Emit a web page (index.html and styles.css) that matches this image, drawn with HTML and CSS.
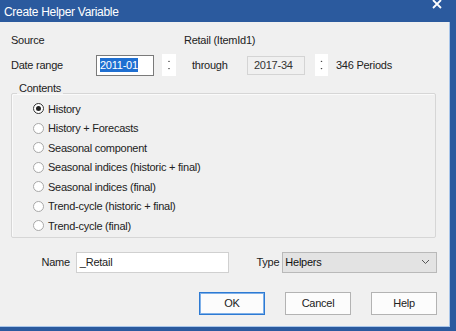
FILE: index.html
```html
<!DOCTYPE html>
<html>
<head>
<meta charset="utf-8">
<link rel="stylesheet" href="styles.css">
</head>
<body>
<div class="window">
  <div class="titlebar">
    <span class="title">Create Helper Variable</span>
    <svg class="close" width="10" height="9" viewBox="0 0 10 9"><path d="M1 0 L9 8 M9 0 L1 8" stroke="#fff" stroke-width="1.8"/></svg>
  </div>
  <div class="client">
    <div class="row row-source">
      <span class="lbl-main">Source</span>
      <span>Retail (ItemId1)</span>
    </div>
    <div class="row row-date">
      <span class="lbl-date">Date range</span>
      <div class="field field-focus"><span class="sel">2011-01</span></div>
      <svg class="spin spin1" width="14" height="22" viewBox="0 0 14 22"><path d="M6 8 L7 6.5 L8 8 Z M6 14 L7 15.5 L8 14 Z" fill="#444"/></svg>
      <span class="through">through</span>
      <div class="field field-dis">2017-34</div>
      <svg class="spin spin2" width="13" height="22" viewBox="0 0 13 22"><path d="M5.5 8 L6.5 6.5 L7.5 8 Z M5.5 14 L6.5 15.5 L7.5 14 Z" fill="#444"/></svg>
      <span class="periods">346 Periods</span>
    </div>
    <div class="group">
      <span class="legend">Contents</span>
      <div class="radios">
        <div class="radio-row"><span class="radio checked"></span>History</div>
        <div class="radio-row"><span class="radio"></span>History + Forecasts</div>
        <div class="radio-row"><span class="radio"></span>Seasonal component</div>
        <div class="radio-row"><span class="radio"></span>Seasonal indices (historic + final)</div>
        <div class="radio-row"><span class="radio"></span>Seasonal indices (final)</div>
        <div class="radio-row"><span class="radio"></span>Trend-cycle (historic + final)</div>
        <div class="radio-row"><span class="radio"></span>Trend-cycle (final)</div>
      </div>
    </div>
    <div class="row row-name">
      <span class="lbl-name">Name</span>
      <div class="field name-field">_Retail</div>
      <span class="lbl-type">Type</span>
      <div class="select">
        <span>Helpers</span>
        <svg width="9" height="6" viewBox="0 0 9 6"><path d="M1 1 L4.5 4.5 L8 1" fill="none" stroke="#555" stroke-width="1"/></svg>
      </div>
    </div>
    <div class="row row-buttons">
      <button class="btn btn-default">OK</button>
      <button class="btn">Cancel</button>
      <button class="btn">Help</button>
    </div>
  </div>
</div>
</body>
</html>
```
FILE: styles.css
```css
html, body {
  margin: 0;
  padding: 0;
}
body {
  width: 456px;
  height: 331px;
  background: #2b5a9e;
  font-family: "Liberation Sans", Arial, sans-serif;
  font-size: 11px;
  letter-spacing: -0.25px;
  color: #222;
  overflow: hidden;
}
.window {
  display: flex;
  flex-direction: column;
  width: 456px;
  height: 331px;
}
.titlebar {
  height: 22px;
  display: flex;
  align-items: flex-start;
  justify-content: space-between;
  color: #fff;
}
.title {
  font-size: 12px;
  margin-left: 4px;
  margin-top: 5px;
  letter-spacing: -0.3px;
}
.close {
  margin-top: 0px;
  margin-right: 14px;
}
.client {
  width: 450px;
  height: 305px;
  box-sizing: border-box;
  background: #f0f0f0;
  border-right: 1px solid #a9c6ea;
  border-bottom: 1px solid #a9c6ea;
  padding: 10px 12px 0 11px;
  display: flex;
  flex-direction: column;
}
.row {
  display: flex;
  align-items: center;
}
.row-source {
  height: 16px;
}
.lbl-main {
  width: 173px;
}
.row-date {
  height: 22px;
  margin-top: 6px;
}
.lbl-date {
  width: 85px;
}
.field {
  box-sizing: border-box;
  height: 21px;
  background: #fff;
  border: 1px solid #9c9c9c;
  display: flex;
  align-items: center;
  padding-left: 3px;
}
.field-focus {
  width: 58px;
  border-color: #7a7a7a;
}
.sel {
  background: #1f6fd1;
  color: #fff;
  padding: 1px 0;
}
.spin {
  background: #fff;
}
.spin1 {
  margin-left: 8px;
}
.through {
  margin-left: 16px;
  width: 55px;
}
.field-dis {
  width: 58px;
  height: 19px;
  background: #f0f0f0;
  border-color: #d4d4d4;
  color: #333;
  padding-left: 6px;
}
.spin2 {
  margin-left: 10px;
}
.periods {
  margin-left: 8px;
}
.group {
  margin-top: 17px;
  width: 425px;
  box-sizing: border-box;
  border: 1px solid #d6d6d6;
  border-radius: 2px;
  box-shadow: inset 1px 1px 0 #fafafa;
  padding-bottom: 1px;
}
.legend {
  display: block;
  width: max-content;
  margin-top: -12px;
  margin-left: 5px;
  padding: 0 2px;
  line-height: 12px;
  background: #f0f0f0;
}
.radios {
  margin-top: 5px;
  padding-left: 21px;
}
.radio-row {
  height: 19.5px;
  display: flex;
  align-items: center;
}
.radio {
  width: 11px;
  height: 11px;
  box-sizing: border-box;
  border: 1px solid #a8a8a8;
  border-radius: 50%;
  background: #fff;
  margin-right: 4px;
  display: flex;
  align-items: center;
  justify-content: center;
}
.radio.checked {
  border-color: #333;
}
.radio.checked::after {
  content: "";
  width: 5px;
  height: 5px;
  border-radius: 50%;
  background: #222;
}
.row-name {
  margin-top: 14px;
  height: 21px;
}
.lbl-name {
  width: 59px;
  text-align: right;
}
.name-field {
  margin-left: 6px;
  width: 154px;
  border-color: #d0d0d0;
}
.lbl-type {
  width: 50px;
  text-align: right;
}
.select {
  margin-left: 3px;
  width: 155px;
  height: 21px;
  box-sizing: border-box;
  background: #e3e3e3;
  border: 1px solid #b9b9b9;
  display: flex;
  align-items: center;
  justify-content: space-between;
  padding: 0 6px 0 2px;
  color: #111;
}
.row-buttons {
  margin-top: 19px;
  justify-content: flex-end;
  gap: 20px;
}
.btn {
  width: 66px;
  height: 23px;
  box-sizing: border-box;
  background: #fcfcfc;
  border: 1px solid #b3b3b3;
  font-family: inherit;
  font-size: 11px;
  letter-spacing: -0.25px;
  color: #222;
  padding: 0;
  margin: 0;
}
.btn-default {
  border-color: #2d7ad3;
  box-shadow: inset 0 0 0 1px #7fb0e8;
}
```
